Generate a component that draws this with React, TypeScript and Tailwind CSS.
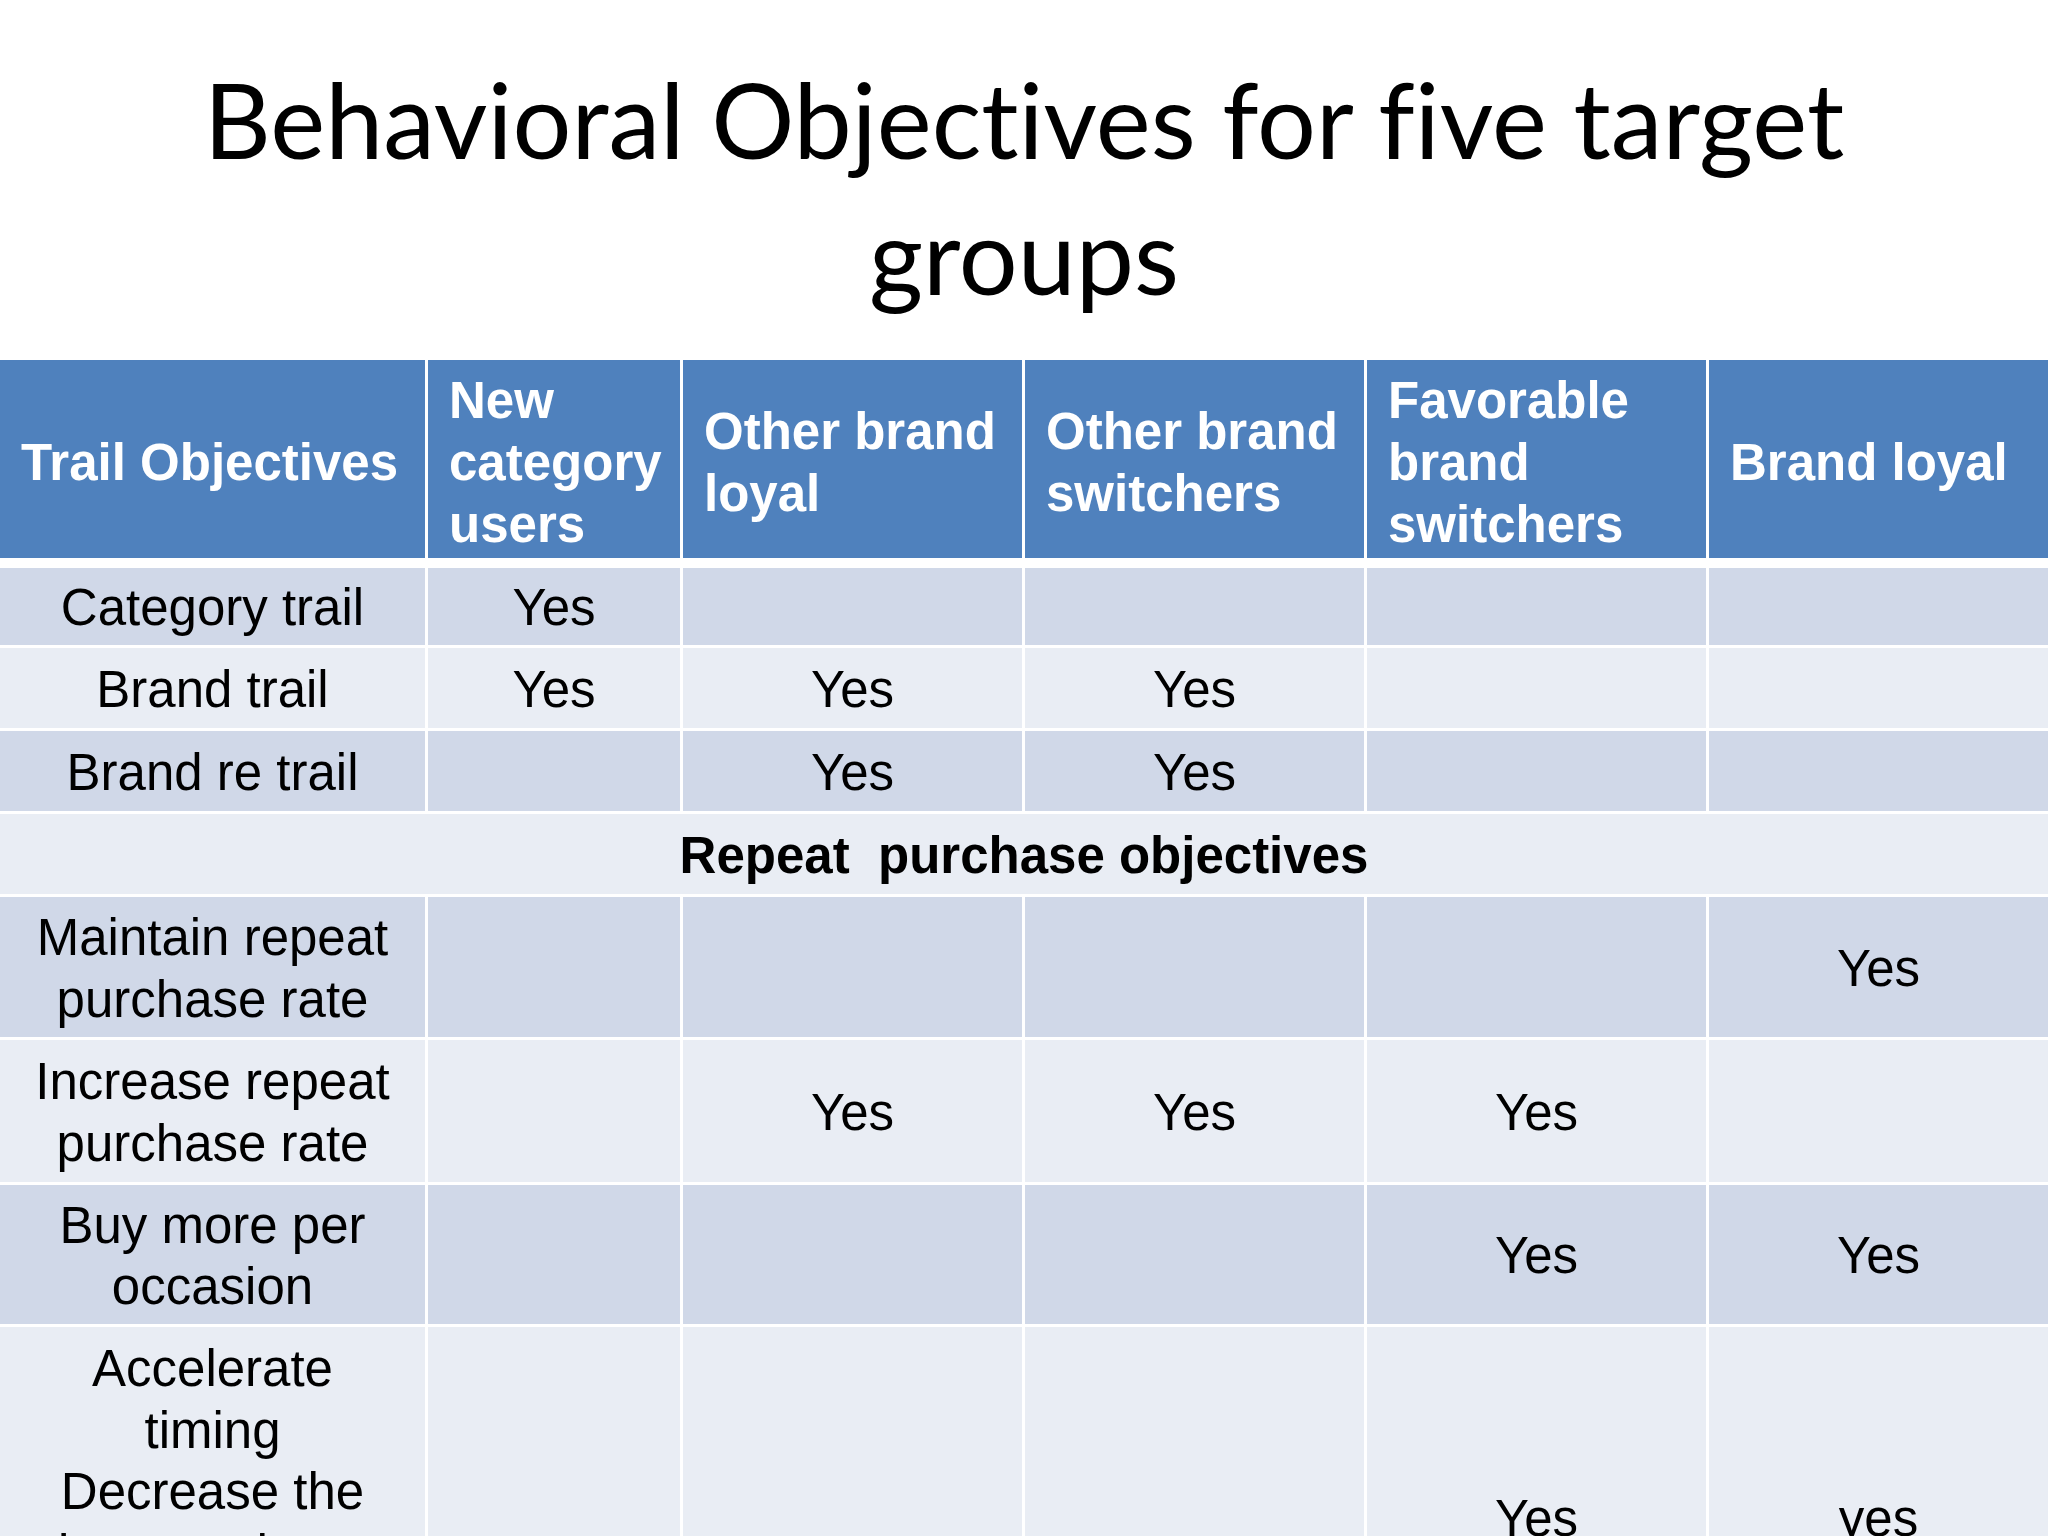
import React from "react";

type Row = {
  label: string[];
  cells: string[];
  h: string;
  dark: boolean;
  top?: boolean;
};

const grid =
  "grid grid-cols-[425px_252px_339px_339px_339px_339px] gap-x-[3px]";

const headers = [
  ["Trail Objectives"],
  ["New", "category", "users"],
  ["Other brand", "loyal"],
  ["Other brand", "switchers"],
  ["Favorable", "brand", "switchers"],
  ["Brand loyal"],
];

const trialRows: Row[] = [
  { label: ["Category trail"], cells: ["Yes", "", "", "", ""], h: "h-[77px]", dark: true },
  { label: ["Brand trail"], cells: ["Yes", "Yes", "Yes", "", ""], h: "h-[80px]", dark: false },
  { label: ["Brand re trail"], cells: ["", "Yes", "Yes", "", ""], h: "h-[80px]", dark: true },
];

const repeatRows: Row[] = [
  { label: ["Maintain repeat", "purchase rate"], cells: ["", "", "", "", "Yes"], h: "h-[140px]", dark: true },
  { label: ["Increase repeat", "purchase rate"], cells: ["", "Yes", "Yes", "Yes", ""], h: "h-[142px]", dark: false },
  { label: ["Buy more per", "occasion"], cells: ["", "", "", "Yes", "Yes"], h: "h-[139px]", dark: true },
  {
    label: ["Accelerate", "timing", "Decrease the", "interpurchase", "interval"],
    cells: ["", "", "", "Yes", "yes"],
    h: "h-[380px]",
    dark: false,
    top: true,
  },
];

function BodyRow({ row }: { row: Row }) {
  const bg = row.dark ? "bg-[#d0d8e8]" : "bg-[#e9edf4]";
  return (
    <div className={`${grid} ${row.h}`}>
      <div
        className={`${bg} flex flex-col items-center text-center ${
          row.top ? "justify-start pt-[11px]" : "justify-center pt-[3px]"
        }`}
      >
        {row.label.map((l) => (
          <span key={l} className="whitespace-nowrap">
            {l}
          </span>
        ))}
      </div>
      {row.cells.map((c, i) => (
        <div key={i} className={`${bg} flex items-center justify-center pt-[3px]`}>
          {c}
        </div>
      ))}
    </div>
  );
}

export default function App() {
  return (
    <div className="h-[1536px] w-[2048px] overflow-hidden bg-white">
      {/* slide title */}
      <h1 className="pt-[51px] text-center font-['Lato',sans-serif] text-[104px] leading-[136px] font-normal text-black [font-variant-ligatures:none]">
        Behavioral Objectives for five target
        <br />
        groups
      </h1>

      <div className="mt-[37px] flex flex-col font-['Liberation_Sans',Arial,sans-serif] text-[51px] leading-[61.5px] text-black">
        {/* header */}
        <div className={`${grid} h-[198px]`}>
          {headers.map((lines, i) => (
            <div
              key={i}
              className="flex flex-col justify-center bg-[#4f81bd] pl-[21px] pt-[7px] font-bold text-white leading-[62px]"
            >
              {lines.map((l) => (
                <span key={l} className="whitespace-nowrap">
                  {l}
                </span>
              ))}
            </div>
          ))}
        </div>

        <div className="mt-[10px] flex flex-col gap-y-[3px]">
          {trialRows.map((r) => (
            <BodyRow key={r.label.join(" ")} row={r} />
          ))}

          <div className="flex h-[80px] items-center justify-center bg-[#e9edf4] pt-[3px] font-bold whitespace-pre">
            Repeat  purchase objectives
          </div>

          {repeatRows.map((r) => (
            <BodyRow key={r.label.join(" ")} row={r} />
          ))}
        </div>
      </div>
    </div>
  );
}
